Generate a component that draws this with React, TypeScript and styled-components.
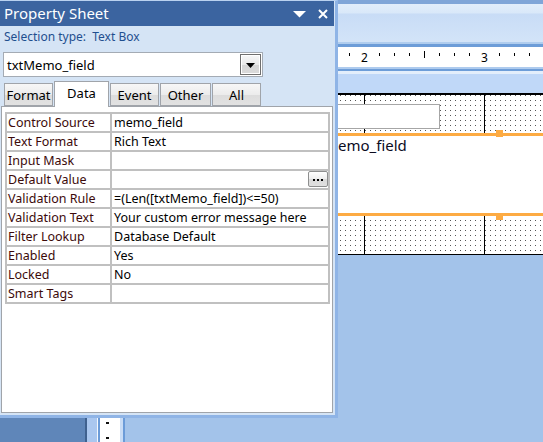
import React from "react";
import styled, { createGlobalStyle } from "styled-components";

const GlobalStyle = createGlobalStyle`
    html, body {
        margin: 0;
        padding: 0;
    }
    body {
        font-family: "Noto Sans", "DejaVu Sans", sans-serif;
        background: #a3c3ea;
    }
    #root {
        position: relative;
        width: 543px;
        height: 442px;
        overflow: hidden;
    }
`;

type Property = { label: string; value: string; builder?: boolean };

const properties: Property[] = [
    { label: "Control Source", value: "memo_field" },
    { label: "Text Format", value: "Rich Text" },
    { label: "Input Mask", value: "" },
    { label: "Default Value", value: "", builder: true },
    { label: "Validation Rule", value: "=(Len([txtMemo_field])<=50)" },
    { label: "Validation Text", value: "Your custom error message here" },
    { label: "Filter Lookup", value: "Database Default" },
    { label: "Enabled", value: "Yes" },
    { label: "Locked", value: "No" },
    { label: "Smart Tags", value: "" },
];

const tabs = [
    { name: "Format", width: 49 },
    { name: "Data", width: 55 },
    { name: "Event", width: 49 },
    { name: "Other", width: 51 },
    { name: "All", width: 49 },
];

const RulerTicks: React.FC = () => {
    const marks: React.ReactNode[] = [];
    for (let k = -8; k <= 28; k++) {
        const x = 124 + 15 * k;
        if (x < 0 || x > 543) continue;
        if (k % 8 === 0) {
            if (k > 0)
                marks.push(
                    <text key={k} x={x + 0.5} y={15} fontSize={12} textAnchor="middle" fill="#000"
                        fontFamily="Noto Sans, sans-serif">
                        {k / 8}
                    </text>
                );
        } else if (k % 8 === 4 || k % 8 === -4) {
            marks.push(<rect key={k} x={x} y={4} width={1} height={7} fill="#000" />);
        } else {
            marks.push(<rect key={k} x={x} y={6} width={1} height={3} fill="#000" />);
        }
    }
    return (
        <svg width={543} height={20} viewBox="0 0 543 20">
            {marks}
        </svg>
    );
};

const App: React.FC = () => {
    return (
        <>
            <GlobalStyle />
            <Workspace>
                <TopStrip />
                <HeaderBand />
                <Ruler>
                    <RulerTicks />
                </Ruler>
                <SubHeader />
                <BodyRow>
                    <NavPane />
                    <Splitter />
                    <VerticalRuler />
                    <RulerGap />
                    <DesignArea>
                        <Section>
                            <LabelControl />
                            <TextControl>
                                memo_field
                                <Handle $side="top" />
                                <Handle $side="bottom" />
                            </TextControl>
                        </Section>
                    </DesignArea>
                </BodyRow>
            </Workspace>

            <Panel>
                <TitleBar>
                    <TitleText>Property Sheet</TitleText>
                    <TitleButtons>
                        <svg width={14} height={8} viewBox="0 0 14 8">
                            <polygon points="0,1 13,1 6.5,7.5" fill="#fff" />
                        </svg>
                        <svg width={10} height={10} viewBox="0 0 10 10">
                            <path d="M1 1 L9 9 M9 1 L1 9" stroke="#fff" strokeWidth={2} />
                        </svg>
                    </TitleButtons>
                </TitleBar>
                <SelectionType>Selection type:&nbsp; Text Box</SelectionType>
                <Combo>
                    <ComboText>txtMemo_field</ComboText>
                    <ComboButton>
                        <svg width={9} height={5} viewBox="0 0 9 5">
                            <polygon points="0,0 9,0 4.5,5" fill="#000" />
                        </svg>
                    </ComboButton>
                </Combo>
                <TabRow>
                    {tabs.map((t) => (
                        <Tab key={t.name} $width={t.width} $active={t.name === "Data"}>
                            {t.name}
                        </Tab>
                    ))}
                </TabRow>
                <TabContent>
                    <PropertyGrid>
                        {properties.map((p) => (
                            <React.Fragment key={p.label}>
                                <LabelCell>{p.label}</LabelCell>
                                <ValueCell>
                                    {p.value}
                                    {p.builder && (
                                        <BuilderButton>
                                            <svg width={10} height={2} viewBox="0 0 10 2">
                                                <rect x={0} y={0} width={2} height={2} fill="#000" />
                                                <rect x={4} y={0} width={2} height={2} fill="#000" />
                                                <rect x={8} y={0} width={2} height={2} fill="#000" />
                                            </svg>
                                        </BuilderButton>
                                    )}
                                </ValueCell>
                            </React.Fragment>
                        ))}
                    </PropertyGrid>
                </TabContent>
            </Panel>
        </>
    );
};

export default App;

/* ---------- design surface ---------- */

const Workspace = styled.div`
    display: flex;
    flex-direction: column;
    width: 543px;
    height: 442px;
    background: #a3c3ea;
`;

const TopStrip = styled.div`
    height: 4px;
    background: #7fa5d8;
`;

const HeaderBand = styled.div`
    height: 38px;
    background: linear-gradient(#e1edfb 0, #d9e8f9 9px, #c8dcf6 10px, #d3e4f8 100%);
`;

const Ruler = styled.div`
    height: 20px;
    margin: 5px 0 7px;
    background: #fff;
    box-shadow: 0 -3px 0 #6d9dd8, 0 -5px 0 #b0cdee, 0 2px 0 #aecbee, 0 4px 0 #6d9dd8, 0 7px 0 #e3eefb;
    svg {
        display: block;
    }
`;

const SubHeader = styled.div`
    height: 19px;
    background: #c0d8f8;
`;

const BodyRow = styled.div`
    flex: 1;
    display: flex;
`;

const NavPane = styled.div`
    width: 85px;
    background: #5f86b9;
    border-right: 2px solid #3f618f;
`;

const Splitter = styled.div`
    width: 13px;
    background: linear-gradient(to right, #aac7ef 0 10px, #f3f7fd 10px 11.5px, #6b9bd8 11.5px);
`;

const VerticalRuler = styled.div`
    width: 20px;
    background-color: #fff;
    background-image: linear-gradient(#111 0 2px, transparent 2px);
    background-size: 3px 15px;
    background-position: 6px 14px;
    background-repeat: repeat-y;
`;

const RulerGap = styled.div`
    width: 5px;
    background: linear-gradient(to right, #c9dcf5 0 3px, #6b9bd8 3px);
`;

const DesignArea = styled.div`
    flex: 1;
    border-top: 2px solid #000;
    align-self: flex-start;
`;

const Section = styled.div`
    position: relative;
    height: 159px;
    border-bottom: 1px solid #000;
    background-color: #fff;
    background-image: linear-gradient(to right, #000 1px, transparent 1px),
        linear-gradient(to right, transparent 1px, #fff 1px),
        linear-gradient(#555 1px, #fff 1px);
    background-size: 120px 100%, 5px 5px, 5px 5px;
    background-position: 119px 0, 0 0, 0 0;
    overflow: hidden;
`;

const LabelControl = styled.div`
    position: absolute;
    left: 125px;
    top: 9px;
    width: 190px;
    height: 25px;
    box-sizing: border-box;
    background: #fff;
    border: 1px solid #a6a6a6;
`;

const TextControl = styled.div`
    position: absolute;
    left: 194px;
    top: 38px;
    width: 361px;
    height: 83px;
    box-sizing: border-box;
    background: #fff;
    border: 3px solid #fdab43;
    padding-left: 2px;
    font-size: 15px;
    line-height: 18px;
    color: #0b0b1e;
`;

const Handle = styled.span<{ $side: "top" | "bottom" }>`
    position: absolute;
    left: 174px;
    width: 7px;
    height: 7px;
    background: #fdab43;
    ${(p) => (p.$side === "top" ? "top: -6px;" : "bottom: -7px;")}
`;

/* ---------- property sheet ---------- */

const Panel = styled.div`
    position: absolute;
    left: 0;
    top: 0;
    width: 338px;
    height: 418px;
    box-sizing: border-box;
    background: #d5e4f5;
    border-top: 1px solid #b9d1f0;
    border-right: 3px solid #8fb4e6;
    border-bottom: 3px solid #8fb4e6;
    padding-bottom: 2px;
    display: flex;
    flex-direction: column;
`;

const TitleBar = styled.div`
    height: 25px;
    margin-right: 1px;
    background: #3b64a0;
    display: flex;
    align-items: center;
    justify-content: space-between;
    padding: 0 6px 0 4px;
`;

const TitleText = styled.span`
    color: #fff;
    font-size: 15px;
    line-height: 25px;
`;

const TitleButtons = styled.div`
    display: flex;
    align-items: center;
    gap: 11px;
    svg {
        display: block;
    }
`;

const SelectionType = styled.div`
    padding: 3px 0 0 4px;
    line-height: 16px;
    font-size: 12px;
    color: #1f4f8f;
`;

const Combo = styled.div`
    margin: 7px 0 0 3px;
    width: 260px;
    height: 25px;
    box-sizing: border-box;
    background: #fff;
    border: 1px solid #a4abb4;
    display: flex;
    align-items: center;
    justify-content: space-between;
    padding: 0 1px 0 3px;
`;

const ComboText = styled.span`
    font-size: 13px;
    color: #000;
`;

const ComboButton = styled.div`
    width: 21px;
    height: 21px;
    box-sizing: border-box;
    border: 1px solid #6f6f6f;
    box-shadow: inset 0 0 0 1px #fff;
    background: linear-gradient(#f7f7f7, #e9e9e9 50%, #d5d5d5 51%, #dadada);
    display: flex;
    align-items: center;
    justify-content: center;
    padding-top: 2px;
`;

const TabRow = styled.div`
    margin: 4px 0 0 4px;
    height: 25px;
    display: flex;
    align-items: flex-end;
    gap: 1px;
    position: relative;
    z-index: 1;
`;

const Tab = styled.div<{ $width: number; $active: boolean }>`
    width: ${(p) => p.$width}px;
    height: ${(p) => (p.$active ? 26 : 23)}px;
    margin-bottom: ${(p) => (p.$active ? -1 : 0)}px;
    box-sizing: border-box;
    border: 1px solid #a0a4aa;
    border-bottom: ${(p) => (p.$active ? "none" : "1px solid #a0a4aa")};
    background: ${(p) => (p.$active ? "#fff" : "linear-gradient(#f7f7f7, #ececec 50%, #dcdcdc 51%, #e2e2e2)")};
    font-size: 13px;
    color: #000;
    display: flex;
    align-items: center;
    justify-content: center;
    padding-bottom: ${(p) => (p.$active ? 3 : 0)}px;
`;

const TabContent = styled.div`
    margin-left: 1px;
    width: 332px;
    height: 307px;
    box-sizing: border-box;
    background: #fff;
    border: 1px solid #a0a4aa;
    padding: 5px 0 0 3px;
`;

const PropertyGrid = styled.div`
    width: 325px;
    box-sizing: border-box;
    display: grid;
    grid-template-columns: 103px 1fr;
    grid-auto-rows: 17px;
    gap: 2px;
    padding: 2px;
    background: #c0c0c0;
`;

const LabelCell = styled.div`
    background: #fff;
    font-size: 12.5px;
    line-height: 17px;
    padding-left: 1px;
    color: #3c0a0a;
    white-space: nowrap;
    overflow: hidden;
`;

const ValueCell = styled.div`
    position: relative;
    background: #fff;
    font-size: 12.5px;
    line-height: 17px;
    padding-left: 2px;
    color: #000;
    white-space: nowrap;
    overflow: hidden;
`;

const BuilderButton = styled.div`
    position: absolute;
    right: 0;
    top: 0;
    width: 20px;
    height: 16px;
    box-sizing: border-box;
    border: 1px solid #8e8f8f;
    border-radius: 2px;
    background: linear-gradient(#ffffff, #eeeeee 50%, #dadada 51%, #e0e0e0);
    display: flex;
    align-items: center;
    justify-content: center;
    padding-top: 2px;
    svg {
        display: block;
    }
`;
